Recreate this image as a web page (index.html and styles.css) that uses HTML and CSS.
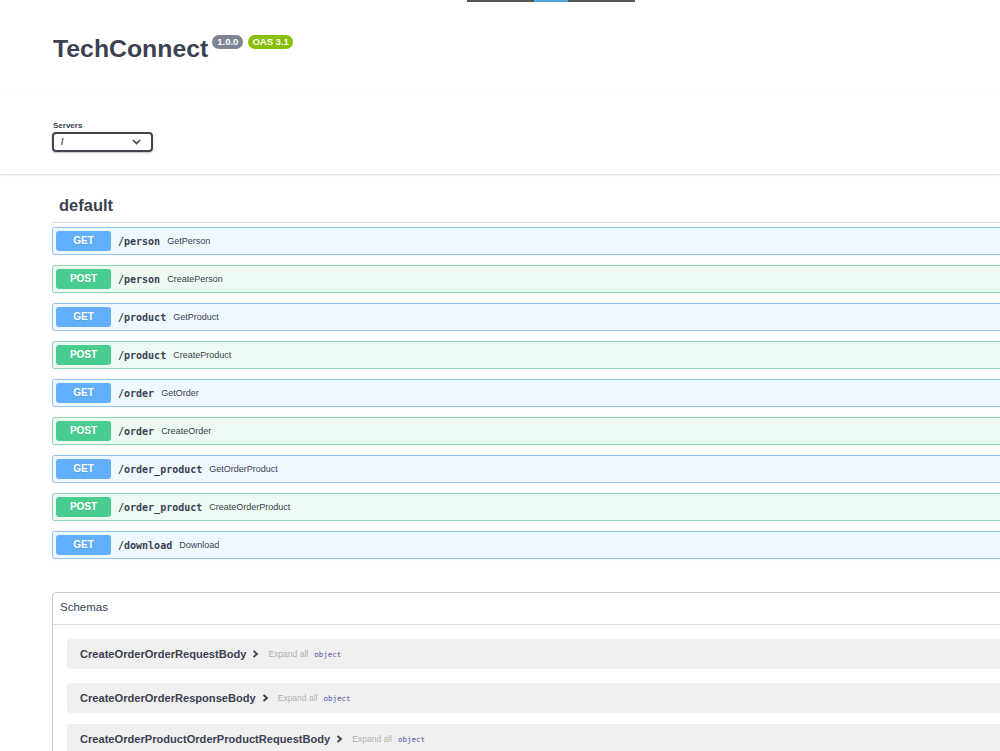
FILE: index.html
```html
<!DOCTYPE html>
<html lang="en">
<head>
    <meta charset="UTF-8">
    <meta name="viewport" content="width=device-width, initial-scale=1.0">
    <title>TechConnect</title>
    <link rel="stylesheet" href="styles.css">
</head>
<body>
    <div class="top-line"><span></span></div>

    <div class="wrapper info">
        <div class="title-row">
            <h2 class="title">TechConnect</h2>
            <span class="badge version">1.0.0</span>
            <span class="badge oas">OAS 3.1</span>
        </div>
    </div>

    <div class="scheme-container">
        <div class="wrapper">
            <label class="servers-label">Servers</label>
            <div class="select">
                <span>/</span>
                <svg width="9" height="6" viewBox="0 0 9 6"><path d="M1 1 L4.5 4.5 L8 1" fill="none" stroke="#3b4151" stroke-width="1.6"/></svg>
            </div>
        </div>
    </div>

    <div class="wrapper">
        <h3 class="tag">default</h3>
        <div class="opblocks">
            <div class="opblock get"><span class="method">GET</span><span class="path">/person</span><span class="desc">GetPerson</span></div>
            <div class="opblock post"><span class="method">POST</span><span class="path">/person</span><span class="desc">CreatePerson</span></div>
            <div class="opblock get"><span class="method">GET</span><span class="path">/product</span><span class="desc">GetProduct</span></div>
            <div class="opblock post"><span class="method">POST</span><span class="path">/product</span><span class="desc">CreateProduct</span></div>
            <div class="opblock get"><span class="method">GET</span><span class="path">/order</span><span class="desc">GetOrder</span></div>
            <div class="opblock post"><span class="method">POST</span><span class="path">/order</span><span class="desc">CreateOrder</span></div>
            <div class="opblock get"><span class="method">GET</span><span class="path">/order_product</span><span class="desc">GetOrderProduct</span></div>
            <div class="opblock post"><span class="method">POST</span><span class="path">/order_product</span><span class="desc">CreateOrderProduct</span></div>
            <div class="opblock get"><span class="method">GET</span><span class="path">/download</span><span class="desc">Download</span></div>
        </div>

        <section class="models">
            <h4 class="models-title">Schemas</h4>
            <div class="models-body">
                <div class="model">
                    <span class="model-title">CreateOrderOrderRequestBody</span>
                    <svg class="arrow" width="7" height="8" viewBox="0 0 7 8"><path d="M1.5 1 L5 4 L1.5 7" fill="none" stroke="#3b4151" stroke-width="1.8"/></svg>
                    <span class="expand">Expand all</span>
                    <span class="type">object</span>
                </div>
                <div class="model">
                    <span class="model-title">CreateOrderOrderResponseBody</span>
                    <svg class="arrow" width="7" height="8" viewBox="0 0 7 8"><path d="M1.5 1 L5 4 L1.5 7" fill="none" stroke="#3b4151" stroke-width="1.8"/></svg>
                    <span class="expand">Expand all</span>
                    <span class="type">object</span>
                </div>
                <div class="model">
                    <span class="model-title">CreateOrderProductOrderProductRequestBody</span>
                    <svg class="arrow" width="7" height="8" viewBox="0 0 7 8"><path d="M1.5 1 L5 4 L1.5 7" fill="none" stroke="#3b4151" stroke-width="1.8"/></svg>
                    <span class="expand">Expand all</span>
                    <span class="type">object</span>
                </div>
            </div>
        </section>
    </div>
</body>
</html>
```

FILE: styles.css
```css
html, body {
    overflow: hidden;
}

body {
    font-family: "Liberation Sans", Arial, sans-serif;
    margin: 0;
    padding: 0;
    background-color: #fff;
    color: #3b4151;
}

.top-line {
    position: absolute;
    top: 0;
    left: 467px;
    width: 168px;
    height: 2px;
    background-color: #555;
}

.top-line span {
    position: absolute;
    left: 67px;
    top: 0;
    width: 34px;
    height: 2px;
    background-color: #4fa3e0;
}

.wrapper {
    width: 1400px;
    padding-left: 52px;
}

/* titulo */
.info {
    padding-top: 37px;
    margin-bottom: 30px;
}

.title-row {
    display: flex;
    align-items: flex-start;
}

.title {
    margin: 0 2px 0 1px;
    font-size: 24.8px;
    line-height: 24px;
    font-weight: bold;
    color: #3b4151;
}

.badge {
    margin-top: -2px;
    margin-left: 2px;
    padding: 0 4px;
    height: 14px;
    line-height: 14px;
    border-radius: 57px;
    font-size: 9.5px;
    font-weight: bold;
    color: #fff;
}

.version {
    padding: 0 5px;
    background-color: #7d8492;
}

.oas {
    margin-left: 5px;
    background-color: #89bf04;
}

/* servers */
.scheme-container {
    padding: 30px 0 22px;
    background-color: #fff;
    box-shadow: 0 1px 2px 0 rgba(0, 0, 0, 0.15);
}

.servers-label {
    display: block;
    font-size: 8px;
    line-height: 10px;
    font-weight: bold;
    padding-left: 1px;
}

.select {
    box-sizing: border-box;
    margin-top: 1px;
    width: 101px;
    height: 20px;
    border: 2px solid #41444e;
    border-radius: 4px;
    box-shadow: 0 1px 2px 0 rgba(0, 0, 0, 0.25);
    display: flex;
    justify-content: space-between;
    align-items: center;
    padding: 0 10px 0 7px;
    font-size: 9px;
    font-weight: bold;
}

/* endpoints */
.tag {
    margin: 22px 0 0;
    padding: 0 0 7px 7px;
    font-size: 16.5px;
    line-height: 19px;
    font-weight: bold;
    border-bottom: 1px solid #dcdcdc;
}

.opblocks {
    margin-top: 4px;
    display: flex;
    flex-direction: column;
    gap: 10px;
}

.opblock {
    box-sizing: border-box;
    height: 28px;
    padding: 0 3px;
    border: 1px solid;
    border-radius: 3px;
    display: flex;
    align-items: center;
    box-shadow: 0 0 2px rgba(0, 0, 0, 0.12);
}

.opblock.get {
    background-color: #eff7ff;
    border-color: #93c6f6;
}

.opblock.post {
    background-color: #edfaf4;
    border-color: #8ad8b4;
}

.method {
    width: 55px;
    height: 20px;
    line-height: 20px;
    text-align: center;
    border-radius: 3px;
    font-size: 10px;
    font-weight: bold;
    color: #fff;
    text-shadow: 0 1px 0 rgba(0, 0, 0, 0.1);
}

.get .method {
    background-color: #61affe;
}

.post .method {
    background-color: #49cc90;
}

.path {
    margin-left: 7px;
    font-family: "DejaVu Sans Mono", "Liberation Mono", monospace;
    font-size: 10px;
    font-weight: bold;
    color: #3b4151;
}

.desc {
    margin-left: 7px;
    font-size: 9px;
    color: #3b4151;
}

/* schemas */
.models {
    margin-top: 33px;
    border: 1px solid #c8cacf;
    border-radius: 4px;
}

.models-title {
    margin: 0;
    padding-left: 7px;
    height: 31px;
    line-height: 28px;
    font-size: 11.5px;
    font-weight: normal;
    color: #3b4151;
    border-bottom: 1px solid #dcdcdc;
}

.models-body {
    padding: 14px 0 0 14px;
}

.model {
    height: 30px;
    margin-bottom: 14px;
    padding-left: 13px;
    background-color: #f0f0f0;
    border-radius: 4px;
    display: flex;
    align-items: center;
}

.model:nth-child(2) {
    margin-bottom: 11px;
}

.model-title {
    font-size: 11.1px;
    font-weight: bold;
    color: #3b4151;
}

.arrow {
    margin-left: 6px;
}

.expand {
    margin-left: 9px;
    font-size: 8.5px;
    color: #b0b0b0;
}

.type {
    margin-left: 6px;
    font-family: "DejaVu Sans Mono", "Liberation Mono", monospace;
    font-size: 7.5px;
    color: #55a;
}
```
